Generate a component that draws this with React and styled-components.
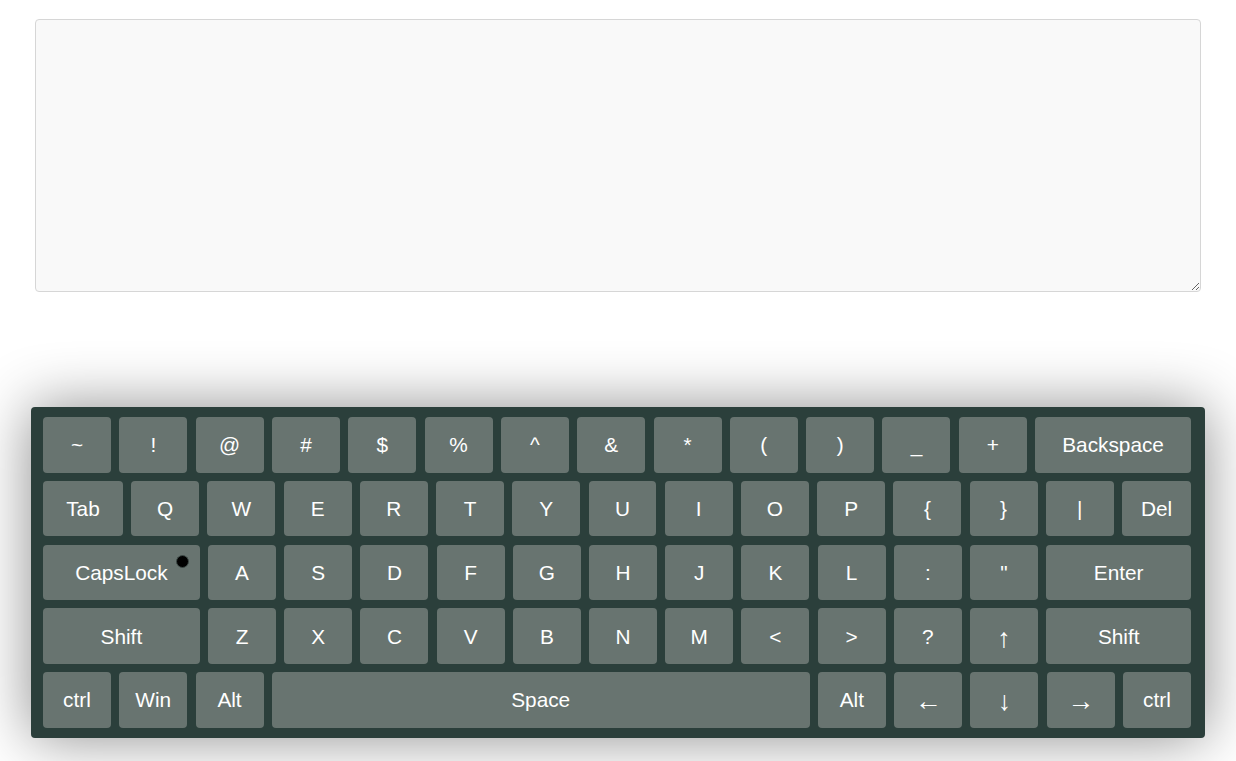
import React from 'react';
import styled, { createGlobalStyle } from 'styled-components';

const GlobalStyle = createGlobalStyle`
  html, body {
    margin: 0;
    padding: 0;
    background: #ffffff;
    font-family: "Liberation Sans", Arial, sans-serif;
  }
`;

const U = 68;

const rows = [
  [['~'], ['!'], ['@'], ['#'], ['$'], ['%'], ['^'], ['&'], ['*'], ['('], [')'], ['_'], ['+'], ['Backspace', 156]],
  [['Tab', 80], ['Q'], ['W'], ['E'], ['R'], ['T'], ['Y'], ['U'], ['I'], ['O'], ['P'], ['{'], ['}'], ['|'], ['Del', 69]],
  [['CapsLock', 157, 'caps'], ['A'], ['S'], ['D'], ['F'], ['G'], ['H'], ['J'], ['K'], ['L'], [':'], ['"'], ['Enter', 145]],
  [['Shift', 157], ['Z'], ['X'], ['C'], ['V'], ['B'], ['N'], ['M'], ['<'], ['>'], ['?'], ['↑', U, 'arrow'], ['Shift', 145]],
  [['ctrl'], ['Win'], ['Alt'], ['Space', 538], ['Alt'], ['←', U, 'arrow'], ['↓', U, 'arrow'], ['→', U, 'arrow'], ['ctrl']],
];

function App() {
  return (
    <Page>
      <GlobalStyle />
      <TextBox spellCheck={false} />
      <Keyboard>
        {rows.map((row, i) => (
          <Row key={i}>
            {row.map(([label, w, kind], j) => (
              <Key key={j} $grow={w || U} $arrow={kind === 'arrow'}>
                {label}
                {kind === 'caps' && <CapsLight />}
              </Key>
            ))}
          </Row>
        ))}
      </Keyboard>
    </Page>
  );
}

export default App;

const Page = styled.div`
  padding: 19px 35px 0;
  height: 742px;
  overflow: hidden;
`;

const TextBox = styled.textarea`
  display: block;
  box-sizing: border-box;
  width: 100%;
  height: 273px;
  margin: 0;
  background: #f9f9f9;
  border: 1px solid #d6d6d6;
  border-radius: 4px;
  resize: both;
  outline: none;
  font-family: "Liberation Sans", Arial, sans-serif;
`;

const Keyboard = styled.div`
  box-sizing: border-box;
  width: 1174px;
  margin: 115px -4px 0;
  padding: 10px 14px 10px 12px;
  background: #2b3f3b;
  border-radius: 4px;
  box-shadow: 0 0 60px rgba(0, 0, 0, 0.45);
  display: flex;
  flex-direction: column;
  gap: 8.3px;
`;

const Row = styled.div`
  display: flex;
  gap: 8.3px;
`;

const Key = styled.div`
  position: relative;
  box-sizing: border-box;
  flex: ${p => p.$grow} 1 0;
  height: 55.5px;
  padding-top: ${p => (p.$arrow ? '4px' : '1px')};
  display: flex;
  align-items: center;
  justify-content: center;
  background: #687470;
  border-radius: 4px;
  color: #ffffff;
  font-size: ${p => (p.$arrow ? '27px' : '20.8px')};
  user-select: none;
`;

const CapsLight = styled.span`
  position: absolute;
  top: 10px;
  right: 11px;
  width: 11px;
  height: 11px;
  border-radius: 50%;
  background: #000000;
  border: 1px solid #3e4a47;
`;
